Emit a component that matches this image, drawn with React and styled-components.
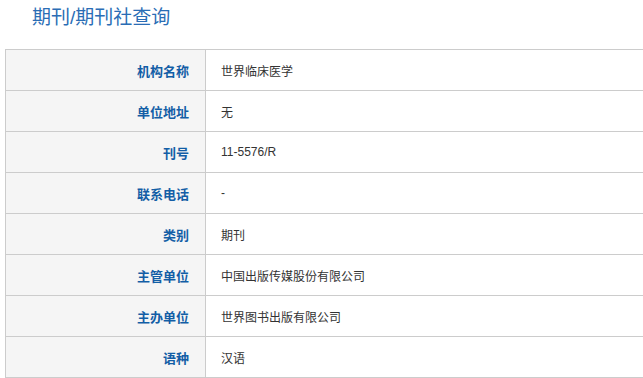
import React from "react";
import styled, { createGlobalStyle } from "styled-components";

const GlobalStyle = createGlobalStyle`
  html, body {
    margin: 0;
    padding: 0;
    background: #fff;
  }
  body {
    font-family: "Liberation Sans", Arial, "Noto Sans CJK SC", sans-serif;
  }
`;

const Page = styled.div`
  padding-left: 5px;
`;

const Title = styled.h2`
  margin: 0;
  height: 49px;
  line-height: 35px;
  padding-left: 27px;
  font-size: 19px;
  font-weight: normal;
  color: #2a6db5;
  box-sizing: border-box;
`;

const InfoTable = styled.table`
  border-collapse: collapse;
  width: 100%;
  font-size: 12px;
`;

const Row = styled.tr`
  height: 41px;
`;

const Label = styled.th`
  width: 183px;
  padding: 0 16px 0 0;
  text-align: right;
  background: #f5f5f5;
  color: #135ea6;
  font-size: 13px;
  font-weight: bold;
  border: 1px solid #cccccc;
`;

const Value = styled.td`
  padding: 0 0 0 15px;
  text-align: left;
  color: #333;
  border: 1px solid #cccccc;
  border-right: none;
`;

const rows = [
  ["机构名称", "世界临床医学"],
  ["单位地址", "无"],
  ["刊号", "11-5576/R"],
  ["联系电话", "-"],
  ["类别", "期刊"],
  ["主管单位", "中国出版传媒股份有限公司"],
  ["主办单位", "世界图书出版有限公司"],
  ["语种", "汉语"],
];

export default function App() {
  return (
    <Page>
      <GlobalStyle />
      <Title>期刊/期刊社查询</Title>
      <InfoTable>
        <tbody>
          {rows.map(([k, v]) => (
            <Row key={k}>
              <Label>{k}</Label>
              <Value>{v}</Value>
            </Row>
          ))}
        </tbody>
      </InfoTable>
    </Page>
  );
}
